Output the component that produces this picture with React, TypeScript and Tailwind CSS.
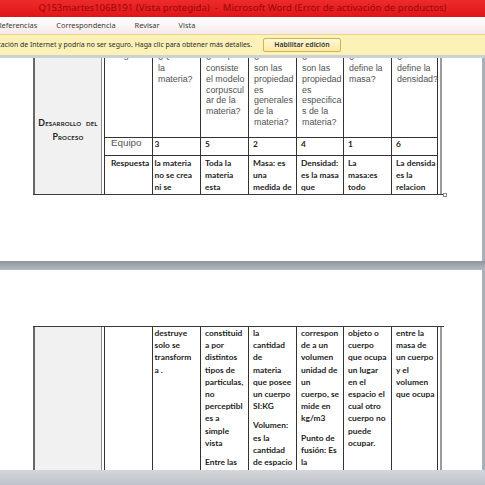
import React from "react";

const COLS = ["w-[48px]", "w-[48px]", "w-[48px]", "w-[48px]", "w-[47px]", "w-[48px]", "w-[47px]"];
const BOLD_PAD = ["pl-[6px]", "pl-[1.5px]", "pl-[4px]", "pl-[4px]", "pl-[4px]", "pl-[4px]", "pl-[4px]"];

const regular = "font-['Liberation_Sans',Arial,sans-serif] text-[8.9px] leading-[10.7px] text-[#525252]";
const bold = "font-['Lato',sans-serif] font-bold text-[8.4px] leading-[12.2px] text-[#1d1d1d]";

const questions: string[][] = [
  ["Pregunta"],
  ["¿Qué es", "la", "materia?"],
  ["¿En qué", "consiste", "el modelo", "corpuscul", "ar de la", "materia?"],
  ["¿Cuáles", "son las", "propiedad", "es", "generales", "de la", "materia?"],
  ["¿Cuáles", "son las", "propiedad", "es", "especifica", "s de la", "materia?"],
  ["¿Cómo se", "define la", "masa?"],
  ["¿Cómo se", "define la", "densidad?"],
];

const teams = ["Equipo", "3", "5", "2", "4", "1", "6"];

const answers: string[][] = [
  ["Respuesta"],
  ["la materia", "no se crea", "ni se"],
  ["Toda la", "materia", "esta"],
  ["Masa: es", "una", "medida de"],
  ["Densidad:", "es la masa", "que"],
  ["La", "masa:es", "todo"],
  ["La densida", "es la", "relacion"],
];

const continued: string[][][] = [
  [],
  [["destruye", "solo se", "transform", "a ."]],
  [["constituid", "a por", "distintos", "tipos de", "particulas,", "no", "perceptibl", "es a", "simple", "vista"], ["Entre las", "sustancias"]],
  [["la", "cantidad", "de", "materia", "que posee", "un cuerpo", "SI:KG"], ["Volumen:", "es la", "cantidad", "de espacio", "que ocupa"]],
  [["correspon", "de a un", "volumen", "unidad de", "un", "cuerpo, se", "mide en", "kg/m3"], ["Punto de", "fusión: Es", "la", "temperatura"]],
  [["objeto o", "cuerpo", "que ocupa", "un lugar", "en el", "espacio el", "cual otro", "cuerpo no", "puede", "ocupar."]],
  [["entre la", "masa de", "un cuerpo", "y el", "volumen", "que ocupa"]],
];

function Lines({ lines, firstGap = false }: { lines: string[]; firstGap?: boolean }) {
  return (
    <>
      {lines.map((l, i) => (
        <div key={i} className={`whitespace-nowrap ${firstGap && i === 0 ? "mb-[2.5px]" : ""}`}>
          {l}
        </div>
      ))}
    </>
  );
}

function GreyCell({ label }: { label: boolean }) {
  return (
    <>
      <div className="w-[2px] bg-[#666]" />
      <div className="w-[67px] bg-[#f1f1f1] border-r border-[#8c8c8c]">
        {label && (
          <div className="pt-[70px] text-center font-['Lato',sans-serif] font-bold text-[8.8px] leading-[14.4px] text-[#222] [font-variant:small-caps] tracking-[0.2px]">
            <div className="whitespace-nowrap">Desarrollo&nbsp; del</div>
            <div>Proceso</div>
          </div>
        )}
      </div>
      <div className="w-[2px] bg-white" />
    </>
  );
}

function RightEdge() {
  return (
    <>
      <div className="w-[2px] bg-white" />
      <div className="w-[2px] bg-[#9b9b9b]" />
    </>
  );
}

function FirstPage() {
  return (
    <div className="relative h-[203px] w-[482px] overflow-hidden bg-white">
      <div className="-mt-[12px] ml-[33px] flex w-[411px] border-b-[1.5px] border-[#3a3a3a]">
        <GreyCell label />
        <div className="flex flex-col">
          <div className="flex h-[91px]">
            {questions.map((q, i) => (
              <div key={i} className={`${COLS[i]} border-l border-[#333] ${i === 6 ? "border-r" : ""} pl-[5px] pt-[4px] ${regular}`}>
                <Lines lines={q} firstGap />
              </div>
            ))}
          </div>
          <div className="flex h-[18px] border-t border-[#333]">
            {teams.map((t, i) => (
              <div
                key={i}
                className={`${COLS[i]} border-l border-[#333] ${i === 6 ? "border-r" : ""} ${BOLD_PAD[i]} ${
                  i === 0 ? "font-['Liberation_Sans',Arial,sans-serif] text-[9.8px] leading-[10px] text-[#555]" : `${bold} leading-[11px]`
                }`}
              >
                {t}
              </div>
            ))}
          </div>
          <div className="flex h-[38.5px] border-t border-[#333]">
            {answers.map((a, i) => (
              <div key={i} className={`${COLS[i]} border-l border-[#333] ${i === 6 ? "border-r" : ""} ${BOLD_PAD[i]} pt-[1px] ${bold}`}>
                <Lines lines={a} />
              </div>
            ))}
          </div>
        </div>
        <RightEdge />
      </div>
      <div className="absolute left-[443px] top-[135px] h-[4px] w-[4px] border border-[#8a8a8a] bg-white" />
    </div>
  );
}

function SecondPage() {
  return (
    <div className="h-[200px] w-[482px] overflow-hidden bg-white pt-[55.5px]">
      <div className="ml-[33px] flex h-[160px] w-[411px] border-t-[1.5px] border-[#3a3a3a]">
        <GreyCell label={false} />
        <div className="flex">
          {continued.map((paras, i) => (
            <div key={i} className={`${COLS[i]} border-l border-[#333] ${i === 6 ? "border-r" : ""} ${BOLD_PAD[i]} pt-[0.5px] ${bold}`}>
              {paras.map((p, j) => (
                <div key={j} className={j > 0 ? "mt-[7px]" : ""}>
                  <Lines lines={p} />
                </div>
              ))}
            </div>
          ))}
        </div>
        <RightEdge />
      </div>
    </div>
  );
}

export default function App() {
  return (
    <div className="h-[485px] w-[485px] overflow-hidden bg-[#aab0b8] font-['Noto_Sans',sans-serif]">
      <div className="flex h-[17px] items-center justify-center bg-gradient-to-b from-[#ee2a2a] to-[#e01418] text-[9.6px] text-[#9c070b] whitespace-nowrap">
        Q1S3martes106B191 (Vista protegida)&nbsp; - &nbsp;Microsoft Word (Error de activación de productos)
      </div>
      <div className="flex h-[17px] items-center gap-[19px] bg-gradient-to-b from-white to-[#f6e9e9] pl-0 text-[7.4px] text-[#3c3c3c] whitespace-nowrap">
        <span className="-ml-[3px]">Referencias</span>
        <span>Correspondencia</span>
        <span>Revisar</span>
        <span>Vista</span>
      </div>
      <div className="flex h-[21px] items-center border-t border-[#e6d58a] bg-[#fcf2b8] whitespace-nowrap">
        <div className="flex w-[252px] shrink-0 justify-end overflow-hidden text-[6.9px] text-[#2a2a2a]">
          <span>Este archivo se originó en una ubicación de Internet y podría no ser seguro. Haga clic para obtener más detalles.</span>
        </div>
        <div className="ml-[11px] flex h-[14px] w-[78px] items-center justify-center rounded-[2px] border border-[#d0b25a] bg-gradient-to-b from-[#fff8d6] to-[#fbe9a3] text-[6.9px] font-semibold text-[#333]">
          Habilitar edición
        </div>
      </div>
      <div className="h-[3px] bg-[#cdd1d7]" />
      <FirstPage />
      <div className="h-[9px] bg-gradient-to-b from-[#8d9399] via-[#a3a9b0] to-[#b4b9c0]" />
      <SecondPage />
      <div className="h-[15px] bg-gradient-to-b from-[#d3d6db] to-[#bfc3c9]" />
    </div>
  );
}
